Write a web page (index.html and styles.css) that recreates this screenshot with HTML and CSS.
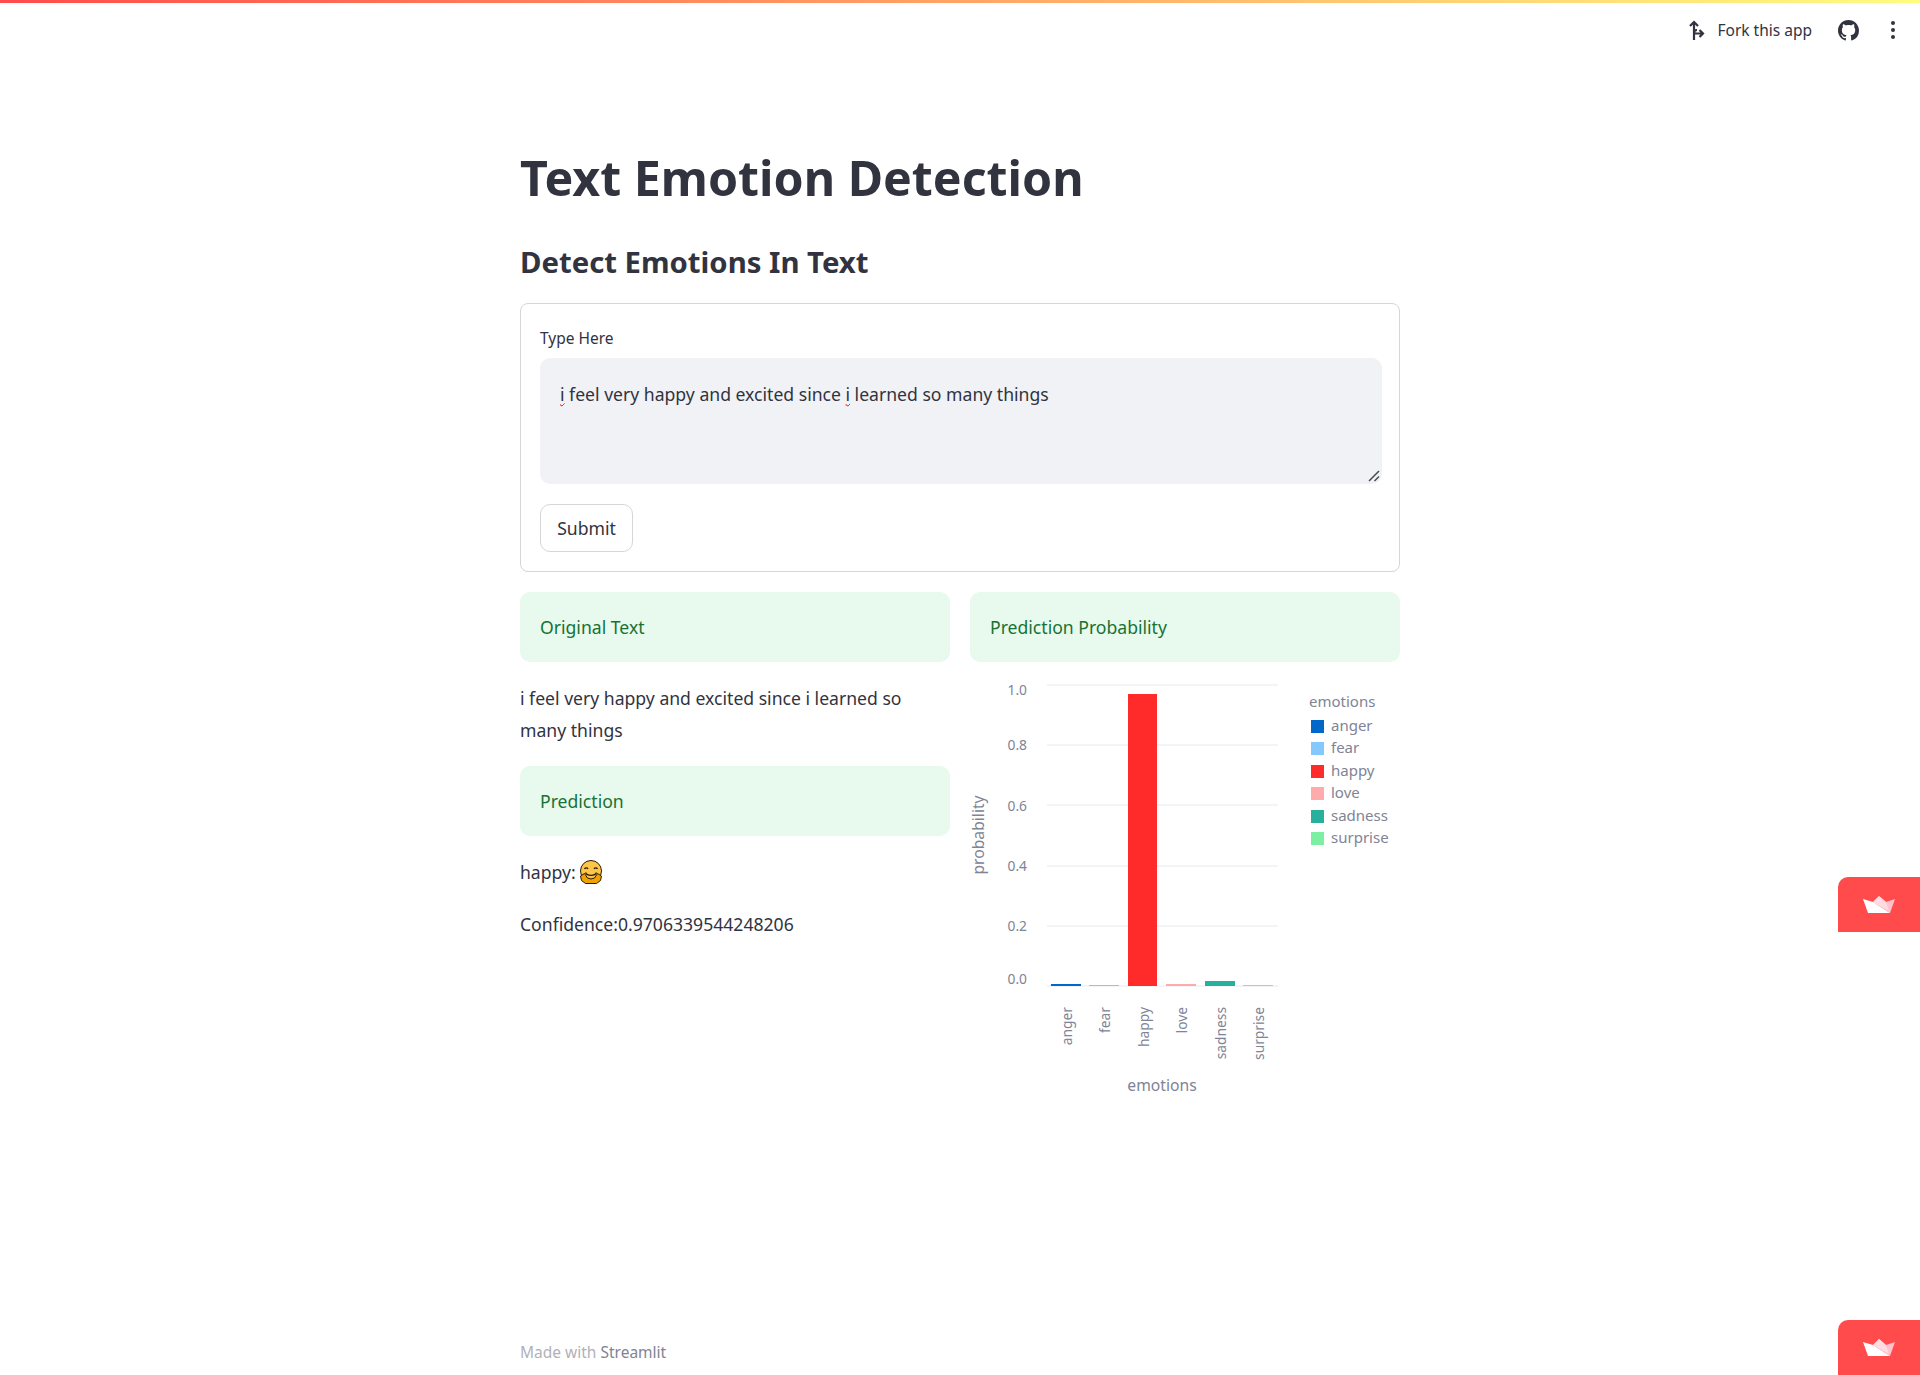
FILE: index.html
```html
<!DOCTYPE html>
<html lang="en">
<head>
<meta charset="UTF-8">
<meta name="viewport" content="width=device-width, initial-scale=1.0">
<title>Text Emotion Detection</title>
<link rel="stylesheet" href="styles.css">
</head>
<body>
<div class="deco-bar"></div>
<header class="toolbar">
  <a class="fork-link">
    <svg class="fork-icon" viewBox="0 0 16 20" width="16" height="20"><path d="M5 20V2M1 6l4-4 4 4M5 13.500h9M10.500 10l3.500 3.500-3.500 3.500M5 13.500c0-2 1-3.500 3-3.500" fill="none" stroke="#31333f" stroke-width="2.200"/></svg>
    <span>Fork this app</span>
  </a>
  <svg class="github-icon" viewBox="0 0 16 16" width="21" height="21"><path fill="#31333f" d="M8 0C3.580 0 0 3.580 0 8c0 3.540 2.290 6.530 5.470 7.590.4.070.55-.17.55-.38 0-.19-.01-.82-.01-1.490-2.010.37-2.530-.49-2.690-.94-.09-.23-.48-.94-.82-1.130-.28-.15-.68-.52-.01-.53.63-.01 1.080.58 1.230.82.72 1.210 1.870.87 2.330.66.070-.52.280-.87.510-1.070-1.780-.2-3.640-.89-3.640-3.950 0-.87.310-1.590.820-2.150-.080-.2-.360-1.020.080-2.120 0 0 .670-.21 2.200.820.640-.180 1.320-.270 2-.270s1.360.090 2 .270c1.530-1.040 2.200-.820 2.200-.820.440 1.100.160 1.920.080 2.120.510.560.820 1.270.820 2.150 0 3.070-1.870 3.750-3.650 3.950.290.250.540.730.540 1.480 0 1.070-.010 1.930-.010 2.200 0 .210.150.460.550.380A8.010 8.010 0 0 0 16 8c0-4.420-3.580-8-8-8z"/></svg>
  <div class="menu-dots"><i></i><i></i><i></i></div>
</header>

<main class="block">
  <h1>Text Emotion Detection</h1>
  <h2>Detect Emotions In Text</h2>

  <form class="form-box">
    <div class="field-label">Type Here</div>
    <div class="text-area">
      <span class="misspelt">i</span> feel very happy and excited since <span class="misspelt">i</span> learned so many things
      <svg class="resize-grip" viewBox="0 0 12 12" width="12" height="12"><path d="M1 11L11 1M6.500 11L11 6.500" stroke="#4a4a52" stroke-width="1.500" fill="none"/></svg>
    </div>
    <button type="button" class="submit-btn">Submit</button>
  </form>

  <div class="columns">
    <section class="col">
      <div class="alert">Original Text</div>
      <p class="original">i feel very happy and excited since i learned so many things</p>
      <div class="alert">Prediction</div>
      <p class="emotion-line">happy:<svg class="hug-emoji" viewBox="0 0 24 24" width="24" height="24">
        <circle cx="12" cy="11" r="10.500" fill="#fdc64a" stroke="#2a1c08" stroke-width="1"/>
        <path d="M5.500 9c.8-1.500 2.700-1.500 3.500 0M15 9c.8-1.500 2.700-1.500 3.500 0" fill="none" stroke="#2a1c08" stroke-width="1.200"/>
        <path d="M6.500 12.500c1.500 3.800 9.500 3.800 11 0" fill="none" stroke="#2a1c08" stroke-width="1.200"/>
        <path d="M1.500 16l4-2.500 3 4.500 3.500 1 3.500-1 3-4.500 4 2.500-1 4.500-4 3H6.500l-4-3z" fill="#f0a202" stroke="#2a1c08" stroke-width="1"/>
      </svg></p>
      <p class="confidence">Confidence:0.9706339544248206</p>
    </section>

    <section class="col">
      <div class="alert">Prediction Probability</div>
      <svg class="chart" viewBox="0 0 430 430" width="430" height="430">
        <g class="grid">
          <line x1="77" x2="308" y1="13" y2="13"/>
          <line x1="77" x2="308" y1="73" y2="73"/>
          <line x1="77" x2="308" y1="133" y2="133"/>
          <line x1="77" x2="308" y1="194" y2="194"/>
          <line x1="77" x2="308" y1="254" y2="254"/>
          <line x1="77" x2="308" y1="314" y2="314"/>
        </g>
        <g class="ticks" text-anchor="end">
          <text x="57" y="23">1.0</text>
          <text x="57" y="78">0.8</text>
          <text x="57" y="139">0.6</text>
          <text x="57" y="199">0.4</text>
          <text x="57" y="259">0.2</text>
          <text x="57" y="312">0.0</text>
        </g>
        <rect x="81" y="312" width="30" height="2" fill="#0068c9"/>
        <rect x="119" y="313" width="30" height="1" fill="#83c9ff"/>
        <rect x="158" y="22" width="29" height="292" fill="#ff2b2b"/>
        <rect x="196" y="312" width="30" height="2" fill="#ffabab"/>
        <rect x="235" y="309" width="30" height="5" fill="#29b09d"/>
        <rect x="273" y="313" width="30" height="1" fill="#7defa1"/>
        <g class="ticks" text-anchor="end">
          <text transform="translate(102 335) rotate(-90)">anger</text>
          <text transform="translate(140 335) rotate(-90)">fear</text>
          <text transform="translate(179 335) rotate(-90)">happy</text>
          <text transform="translate(217 335) rotate(-90)">love</text>
          <text transform="translate(256 335) rotate(-90)">sadness</text>
          <text transform="translate(294 335) rotate(-90)">surprise</text>
        </g>
        <text class="axis-title" x="192" y="419" text-anchor="middle">emotions</text>
        <text class="axis-title" transform="translate(14 163) rotate(-90)" text-anchor="middle">probability</text>
        <g class="legend">
          <text class="axis-title" x="339" y="35">emotions</text>
          <rect x="341" y="48" width="13" height="13" fill="#0068c9"/><text x="361" y="59">anger</text>
          <rect x="341" y="70" width="13" height="13" fill="#83c9ff"/><text x="361" y="81">fear</text>
          <rect x="341" y="93" width="13" height="13" fill="#ff2b2b"/><text x="361" y="104">happy</text>
          <rect x="341" y="115" width="13" height="13" fill="#ffabab"/><text x="361" y="126">love</text>
          <rect x="341" y="138" width="13" height="13" fill="#29b09d"/><text x="361" y="149">sadness</text>
          <rect x="341" y="160" width="13" height="13" fill="#7defa1"/><text x="361" y="171">surprise</text>
        </g>
      </svg>
    </section>
  </div>
</main>

<footer class="foot">Made with <span>Streamlit</span></footer>

<div class="crown-tab crown-mid">
  <svg viewBox="0 0 32 17" width="32" height="17"><path d="M10 6l6-6 7 6 9-3-5 14z" fill="#ffc2cc"/><path d="M10 6l6-6 7 6 3 9z" fill="#ffdbe2"/><path d="M0 3l10 3 17 11H5z" fill="#fff"/></svg>
</div>
<div class="crown-tab crown-low">
  <svg viewBox="0 0 32 17" width="32" height="17"><path d="M10 6l6-6 7 6 9-3-5 14z" fill="#ffc2cc"/><path d="M10 6l6-6 7 6 3 9z" fill="#ffdbe2"/><path d="M0 3l10 3 17 11H5z" fill="#fff"/></svg>
</div>
</body>
</html>
```

FILE: styles.css
```css
/* page */
body {
    margin: 0;
    height: 1375px;
    overflow: hidden;
    position: relative;
    font-family: "Noto Sans", sans-serif;
    font-size: 17.600px;
    color: #31333f;
    background: #fff;
    display: flex;
    flex-direction: column;
}
.deco-bar {
    height: 3px;
    background: linear-gradient(90deg, #ff4b4b, #fffd80);
}
.toolbar {
    height: 54px;
    display: flex;
    justify-content: flex-end;
    align-items: center;
    padding-right: 25px;
}
.fork-link {
    display: flex;
    align-items: center;
    gap: 12px;
    font-size: 15.500px;
    margin-right: 26px;
}
.github-icon {
    margin-right: 32px;
}
.menu-dots {
    display: flex;
    flex-direction: column;
    gap: 3px;
}
.menu-dots i {
    width: 4px;
    height: 4px;
    border-radius: 50%;
    background: #31333f;
}

/* main column */
.block {
    width: 880px;
    margin: 0 auto;
    flex: 1;
}
h1 {
    margin: 87px 0 0;
    font-size: 48.300px;
    line-height: 66px;
    font-weight: 700;
}
h2 {
    margin: 30px 0 0;
    font-size: 29.300px;
    line-height: 44px;
    font-weight: 700;
}
.form-box {
    margin-top: 19px;
    height: 269px;
    box-sizing: border-box;
    border: 1px solid #d6d6d8;
    border-radius: 8px;
    padding: 21px 17px 0 19px;
}
.field-label {
    font-size: 15.500px;
    line-height: 26px;
}
.text-area {
    position: relative;
    margin-top: 7px;
    height: 126px;
    box-sizing: border-box;
    padding: 21px 20px;
    line-height: 30px;
    background: #f0f2f6;
    border-radius: 10px;
}
.misspelt {
    text-decoration: underline wavy #f00 1px;
}
.resize-grip {
    position: absolute;
    right: 2px;
    bottom: 2px;
}
.submit-btn {
    display: block;
    margin-top: 20px;
    width: 93px;
    height: 48px;
    font: inherit;
    color: inherit;
    background: #fff;
    border: 1px solid #d6d6d8;
    border-radius: 10px;
}

/* results */
.columns {
    display: flex;
    gap: 20px;
    margin-top: 20px;
}
.col {
    flex: 1;
    min-width: 0;
}
.alert {
    height: 70px;
    line-height: 70px;
    padding-left: 20px;
    color: #177233;
    background: #e8f9ee;
    border-radius: 10px;
}
.original {
    margin: 20px 0 20px;
    line-height: 32px;
}
.emotion-line {
    margin: 20px 0 0;
    line-height: 32px;
    display: flex;
    align-items: center;
}
.hug-emoji {
    margin-left: 3px;
}
.confidence {
    margin: 20px 0 0;
    line-height: 32px;
}

/* chart */
.chart {
    display: block;
    margin-top: 10px;
    overflow: visible;
    font-family: "Noto Sans", sans-serif;
}
.grid line {
    stroke: #e6eaf1;
    stroke-width: 1;
}
.ticks text {
    font-size: 13.800px;
    fill: #808495;
}
.axis-title {
    font-size: 15.700px;
    fill: #808495;
}
.legend text {
    font-size: 15px;
    fill: #808495;
}

/* footer + tabs */
.foot {
    position: absolute;
    left: 520px;
    top: 1341px;
    font-size: 15.500px;
    color: #b0b2b8;
}
.foot span {
    color: #808495;
}
.crown-tab {
    position: absolute;
    right: 0;
    width: 82px;
    height: 55px;
    background: #ff4b4b;
    border-top-left-radius: 10px;
    display: flex;
    align-items: center;
    justify-content: center;
}
.crown-mid {
    top: 877px;
}
.crown-low {
    top: 1320px;
}
```
